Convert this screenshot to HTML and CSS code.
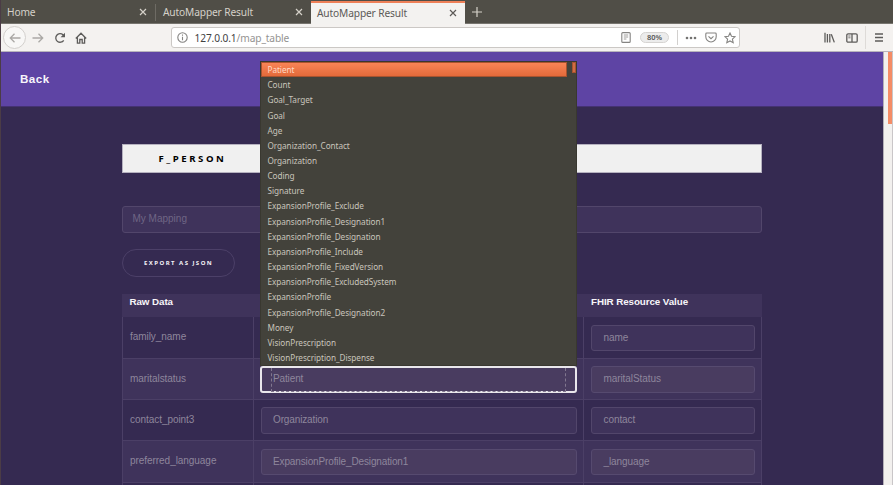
FILE: index.html
```html
<!DOCTYPE html>
<html lang="en">
<head>
<meta charset="utf-8">
<title>AutoMapper Result</title>
<link rel="stylesheet" href="styles.css">
</head>
<body>
<div class="window">
  <div class="tabs">
    <div class="tab tab-first"><span class="tab-label">Home</span><svg class="close" viewBox="0 0 8 8"><path d="M1 1l6 6M7 1L1 7"/></svg></div>
    <div class="tab tab-second"><span class="tab-label">AutoMapper Result</span><svg class="close" viewBox="0 0 8 8"><path d="M1 1l6 6M7 1L1 7"/></svg></div>
    <div class="tab tab-active"><span class="tab-label">AutoMapper Result</span><svg class="close" viewBox="0 0 8 8"><path d="M1 1l6 6M7 1L1 7"/></svg></div>
    <svg class="plus" viewBox="0 0 10 10"><path d="M5 0v10M0 5h10"/></svg>
  </div>
  <div class="toolbar">
    <div class="back-circle"><svg class="icon muted" width="12" height="12" viewBox="0 0 12 12"><path d="M11.5 6H1.5M5.5 1.8L1.3 6l4.2 4.2"/></svg></div>
    <svg class="icon muted forward" width="12" height="12" viewBox="0 0 12 12"><path d="M.5 6h10M6.5 1.8L10.7 6l-4.2 4.2"/></svg>
    <svg class="icon reload" width="12" height="12" viewBox="0 0 12 12"><path d="M9.7 8.3A4.3 4.3 0 1 1 9 2.8L10 4"/><path class="solid" d="M11 .8v4.4H6.6z"/></svg>
    <svg class="icon home" width="12" height="12" viewBox="0 0 12 12"><path d="M.8 6.5L6 1.2l5.2 5.3M2.4 5.5v5.7h2.4V7.5h2.4v3.7h2.4V5.5"/></svg>
    <div class="urlbar">
      <svg class="icon info" width="11" height="11" viewBox="0 0 11 11"><circle cx="5.5" cy="5.5" r="4.7"/><path d="M5.5 4.8v3.4M5.5 2.6v1.2"/></svg>
      <span class="url"><b>127.0.0.1</b>/map_table</span>
      <svg class="icon reader" width="10" height="11" viewBox="0 0 10 11"><rect x=".8" y=".6" width="8.4" height="9.8" rx="1"/><path class="thin" d="M2.8 3h4.4M2.8 5h4.4M2.8 7h2.6"/></svg>
      <span class="zoom">80%</span>
      <span class="divider"></span>
      <svg class="dots" width="12" height="4" viewBox="0 0 12 4"><circle cx="2" cy="2" r="1.3"/><circle cx="6" cy="2" r="1.3"/><circle cx="10" cy="2" r="1.3"/></svg>
      <svg class="icon pocket" width="12" height="11" viewBox="0 0 12 11"><path d="M1.7 1h8.6q.9 0 .9.9v2.9a5.2 5.2 0 0 1-10.4 0V1.9q0-.9.9-.9zM3.5 4.3L6 6.7l2.5-2.4"/></svg>
      <svg class="icon star" width="12" height="12" viewBox="0 0 12 12"><path d="M6 1l1.5 3.2 3.6.4-2.7 2.5.8 3.6L6 8.9l-3.2 1.8.8-3.6L.9 4.6l3.6-.4z"/></svg>
    </div>
    <svg class="icon library" width="11" height="11" viewBox="0 0 11 11"><path d="M1 .7v9.8M3.4 2v8.5M5.8 2v8.5M7.3 2.2l3 8.2"/></svg>
    <svg class="icon sidebar" width="12" height="10" viewBox="0 0 12 10"><rect x=".8" y=".8" width="10.4" height="8.4" rx="1.3"/><path d="M6 1v8"/><path class="thin" d="M2.3 3h2.2M2.3 4.8h2.2"/></svg>
    <span class="tool-divider"></span>
    <svg class="icon menu" width="8" height="9" viewBox="0 0 8 9"><path d="M0 1h8M0 4.5h8M0 8h8"/></svg>
  </div>
  <div class="viewport">
    <main class="page">
      <header class="header"><span class="back">Back</span></header>
      <div class="container">
        <div class="title">F_PERSON</div>
        <div class="field mapping">My Mapping</div>
        <div class="export">EXPORT AS JSON</div>
        <div class="table">
          <div class="thead"><div>Raw Data</div><div></div><div>FHIR Resource Value</div></div>
          <div class="row"><div class="raw">family_name</div><div class="cell"><div class="field"></div></div><div class="cell"><div class="field">name</div></div></div>
          <div class="row alt">
            <div class="raw">maritalstatus</div>
            <div class="cell">
              <div class="field focused"><span class="focus-ring">Patient</span></div>
              <div class="dropdown">
                <div class="options">
                  <div class="option selected">Patient</div>
                  <div class="option">Count</div>
                  <div class="option">Goal_Target</div>
                  <div class="option">Goal</div>
                  <div class="option">Age</div>
                  <div class="option">Organization_Contact</div>
                  <div class="option">Organization</div>
                  <div class="option">Coding</div>
                  <div class="option">Signature</div>
                  <div class="option">ExpansionProfile_Exclude</div>
                  <div class="option">ExpansionProfile_Designation1</div>
                  <div class="option">ExpansionProfile_Designation</div>
                  <div class="option">ExpansionProfile_Include</div>
                  <div class="option">ExpansionProfile_FixedVersion</div>
                  <div class="option">ExpansionProfile_ExcludedSystem</div>
                  <div class="option">ExpansionProfile</div>
                  <div class="option">ExpansionProfile_Designation2</div>
                  <div class="option">Money</div>
                  <div class="option">VisionPrescription</div>
                  <div class="option">VisionPrescription_Dispense</div>
                </div>
                <div class="list-thumb"></div>
              </div>
            </div>
            <div class="cell"><div class="field">maritalStatus</div></div>
          </div>
          <div class="row"><div class="raw">contact_point3</div><div class="cell"><div class="field">Organization</div></div><div class="cell"><div class="field">contact</div></div></div>
          <div class="row alt"><div class="raw">preferred_language</div><div class="cell"><div class="field">ExpansionProfile_Designation1</div></div><div class="cell"><div class="field">_language</div></div></div>
          <div class="row"><div class="raw"></div><div class="cell"></div><div class="cell"></div></div>
        </div>
      </div>
    </main>
    <div class="scrollbar"><div class="thumb"></div></div>
  </div>
</div>
</body>
</html>
```
FILE: styles.css
```css
* { box-sizing: border-box; }
body { margin: 0; overflow: hidden; background: #352a51; font-family: "Liberation Sans", sans-serif; }
.window { width: 893px; height: 485px; overflow: hidden; display: flex; flex-direction: column; border-left: 1px solid #4b3c46; }

.tabs { height: 24px; flex: none; display: flex; align-items: stretch; background: #504e47; border-bottom: 1px solid #77756f; color: #d5d1c9; font: 10.2px "Noto Sans", sans-serif; }
.tab { display: flex; align-items: center; justify-content: space-between; padding: 1px 8px 0 6px; }
.tab-first { width: 154px; position: relative; }
.tab-first::after { content: ""; position: absolute; right: -1px; top: 4px; height: 17px; width: 1px; background: #6e6b64; }
.tab-second { width: 156px; padding-left: 8px; }
.tab-active { width: 154px; height: 23px; margin-top: 1px; padding: 0 8px 1px 6px; background: #f3f2f0; color: #5c5a57; border-top: 2px solid #ee8058; }
.tab-label { letter-spacing: -.14px; }
.close { width: 8px; height: 8px; fill: none; stroke: currentColor; stroke-width: 1.2; }
.plus { width: 10px; height: 10px; margin: 7px 0 0 7px; fill: none; stroke: #d5d1c9; stroke-width: 1.2; }

.toolbar { height: 28px; flex: none; display: flex; align-items: center; background: #f4f2f0; border-bottom: 1px solid #b8b4bc; }
.icon { flex: none; fill: none; stroke: #5d5c5a; stroke-width: 1.3; }
.icon .thin { stroke-width: .8; }
.icon .solid { fill: #5d5c5a; stroke: none; }
.icon.muted { stroke: #aaa8a5; }
.back-circle { width: 23px; height: 23px; margin-left: 2px; border: 1px solid #d3d0cd; border-radius: 50%; display: flex; align-items: center; justify-content: center; background: #f8f7f6; }
.forward { margin-left: 6px; }
.reload { margin-left: 10px; }
.home { margin-left: 9px; }
.urlbar { width: 569px; height: 21px; margin-left: 84px; padding: 0 3px 0 5px; display: flex; align-items: center; background: #fff; border: 1px solid #cbc8c5; border-radius: 3px; }
.info, .reader, .pocket, .star { stroke: #858482; stroke-width: 1.1; }
.url { margin-left: 6.5px; flex: 1; color: #949391; font: 10.2px "Noto Sans", sans-serif; letter-spacing: -.12px; }
.url b { font-weight: 400; color: #42413f; }
.zoom { width: 29px; height: 11px; margin-left: 9px; border: 1px solid #d6d4d2; border-radius: 6px; background: #ececec; color: #555; font: 600 7.5px/9px "Noto Sans", sans-serif; text-align: center; }
.divider { width: 1px; height: 15px; margin: 0 7px 0 8px; background: #d2d0ce; }
.dots { fill: #747371; }
.pocket { margin-left: 8px; }
.star { margin-left: 7px; }
.library { margin-left: 84px; }
.sidebar { margin-left: 11px; }
.tool-divider { width: 1px; height: 23px; margin: 0 9px 0 7px; background: #dedbd8; }

.viewport { flex: 1; min-height: 0; display: flex; }
.page { width: 882px; flex: none; background: #352a51; }
.header { height: 55px; display: flex; align-items: center; padding-left: 19px; background: #5e44a4; border-bottom: 1px solid #443272; }
.back { color: #f7f5fb; font-size: 11.6px; font-weight: 700; letter-spacing: .5px; margin-top: -2px; }
.container { width: 640px; margin-left: 121px; padding-top: 37px; }
.title { height: 29px; padding-left: 35.5px; background: #f0f0f0; border: 1px solid #b5b1bf; color: #000; font: 700 9.6px/27px "Noto Sans", sans-serif; letter-spacing: 2.55px; }
.field { height: 26.7px; border: 1px solid #52466b; border-radius: 3px; background: #3f335b; color: #8e869c; font-size: 10px; line-height: 23.5px; padding-left: 11.5px; }
.mapping { margin-top: 33px; padding-left: 9.5px; color: #6f6685; }
.export { width: 113px; height: 28px; margin-top: 16px; border: 1px solid #4c4068; border-radius: 14px; color: #f3f1f6; font: 700 6px/26px "Noto Sans", sans-serif; letter-spacing: 1.46px; padding-left: 21px; white-space: nowrap; }

.table { margin-top: 17.3px; }
.thead, .row { display: grid; grid-template-columns: 130.5px 331px 178.5px; }
.thead { height: 23.3px; background: #3f335b; color: #f7f5f9; font-size: 9.8px; font-weight: 700; line-height: 15.5px; letter-spacing: -.08px; }
.thead > div { padding-left: 7.5px; white-space: nowrap; }
.row { height: 41.4px; border-left: 1px solid #4b3f66; border-right: 1px solid #4b3f66; border-bottom: 1px solid #4b3f66; grid-template-columns: 129.5px 330.5px 178px; }
.row.alt { background: #3f335b; }
.row.alt .field { background: #493c60; border-color: #564a6f; }
.raw { padding-left: 7px; color: #8e869c; font-size: 10px; line-height: 40px; letter-spacing: -.05px; }
.cell { position: relative; border-left: 1px solid #4b3f66; padding: 7.3px 6.5px 0 7px; }
.row .field { letter-spacing: -.08px; }
.cell:nth-child(2) .field { letter-spacing: -.13px; }
.row .field.focused { width: 317px; height: 27.5px; margin: 0 -1px; padding: 0 9px; border: 2px solid #e9e7ec; }
.focus-ring { display: block; height: 24px; border: 1px dashed #81778f; border-top: 0; padding-left: 1.5px; line-height: 21px; }
.dropdown { position: absolute; left: 6px; bottom: 33px; z-index: 2; width: 317px; height: 305px; display: flex; background: #43423b; border: 1px solid #393830; }
.options { width: 306px; }
.option { height: 15.16px; padding-left: 7px; color: #c9c5bc; font: 8.2px/15.6px "Noto Sans", sans-serif; letter-spacing: -.05px; white-space: nowrap; }
.option.selected { color: #ffd9c5; background: linear-gradient(#f88456, #e36a3a); border: 1px solid #a8532f; padding-left: 6px; line-height: 14px; }
.list-thumb { width: 4px; height: 11px; margin-left: 5px; background: #d06d43; border: 1px solid #a8532f; }
.scrollbar { flex: 1; display: flex; justify-content: flex-end; background: #f2f0ee; border-left: 1px solid #b4b0b8; border-right: 1px solid #c9c6c8; }
.thumb { width: 4px; height: 72px; background: #f48c66; }
```
